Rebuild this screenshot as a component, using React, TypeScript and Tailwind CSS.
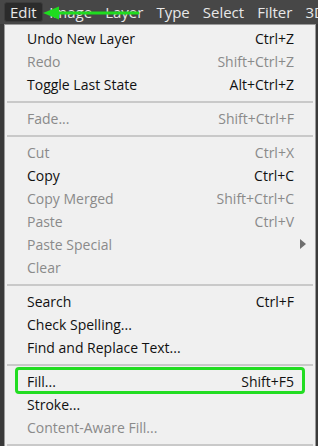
type Item =
  | { kind: "sep" }
  | { kind: "item"; label: string; shortcut?: string; disabled?: boolean; submenu?: boolean; marked?: boolean };

const items: Item[] = [
  { kind: "item", label: "Undo New Layer", shortcut: "Ctrl+Z" },
  { kind: "item", label: "Redo", shortcut: "Shift+Ctrl+Z", disabled: true },
  { kind: "item", label: "Toggle Last State", shortcut: "Alt+Ctrl+Z" },
  { kind: "sep" },
  { kind: "item", label: "Fade...", shortcut: "Shift+Ctrl+F", disabled: true },
  { kind: "sep" },
  { kind: "item", label: "Cut", shortcut: "Ctrl+X", disabled: true },
  { kind: "item", label: "Copy", shortcut: "Ctrl+C" },
  { kind: "item", label: "Copy Merged", shortcut: "Shift+Ctrl+C", disabled: true },
  { kind: "item", label: "Paste", shortcut: "Ctrl+V", disabled: true },
  { kind: "item", label: "Paste Special", disabled: true, submenu: true },
  { kind: "item", label: "Clear", disabled: true },
  { kind: "sep" },
  { kind: "item", label: "Search", shortcut: "Ctrl+F" },
  { kind: "item", label: "Check Spelling..." },
  { kind: "item", label: "Find and Replace Text..." },
  { kind: "sep" },
  { kind: "item", label: "Fill...", shortcut: "Shift+F5", marked: true },
  { kind: "item", label: "Stroke..." },
  { kind: "item", label: "Content-Aware Fill...", disabled: true },
  { kind: "sep" },
];

const menus = ["Image", "Layer", "Type", "Select", "Filter", "3D"];

export default function App() {
  return (
    <div className="relative w-[318px] h-[446px] overflow-hidden bg-[#3a3a3a] font-['Open_Sans',sans-serif]">
      {/* menu bar */}
      <div className="relative flex h-6 items-center bg-[#474747] text-[15px] text-[#e8e8e8] whitespace-nowrap">
        <span className="ml-1 flex h-5 items-center rounded-[3px] border border-[#3c3c3c] bg-[#2b2b2b] px-[5px]">
          Edit
        </span>
        {menus.map((m) => (
          <span key={m} className="px-[6.5px]">
            {m}
          </span>
        ))}
        <svg className="absolute left-0 top-0" width="150" height="24" viewBox="0 0 150 24">
          <line x1="52" y1="13" x2="138" y2="13" stroke="#1fdc1f" strokeWidth="3" strokeLinecap="round" />
          <polygon points="43,13 59,6.5 59,19.5" fill="#1fdc1f" />
        </svg>
      </div>

      {/* dropdown */}
      <div className="ml-1 w-[312px] border border-[#9a9a9a] bg-[#f0f0f0] pt-[2px] text-[14px]">
        {items.map((it, i) =>
          it.kind === "sep" ? (
            <div key={i} className="flex h-[11px] items-center px-[2px]">
              <div className="h-[2px] w-full bg-[#c9c9c9]" />
            </div>
          ) : (
            <div
              key={i}
              className={`relative flex h-[23px] items-center justify-between pl-[22px] pr-[21px] ${
                it.disabled ? "text-[#8a8a8a]" : "text-[#111]"
              }`}
            >
              <span>{it.label}</span>
              {it.shortcut && <span>{it.shortcut}</span>}
              {it.submenu && (
                <svg className="absolute right-[9px] top-[6px]" width="6" height="10" viewBox="0 0 6 10">
                  <polygon points="0,0 6,5 0,10" fill="#6e6e6e" />
                </svg>
              )}
              {it.marked && (
                <div className="absolute left-[10px] right-[10px] -top-[3px] -bottom-[1px] rounded-[4px] border-[3px] border-[#22dd22]" />
              )}
            </div>
          )
        )}
      </div>
    </div>
  );
}
